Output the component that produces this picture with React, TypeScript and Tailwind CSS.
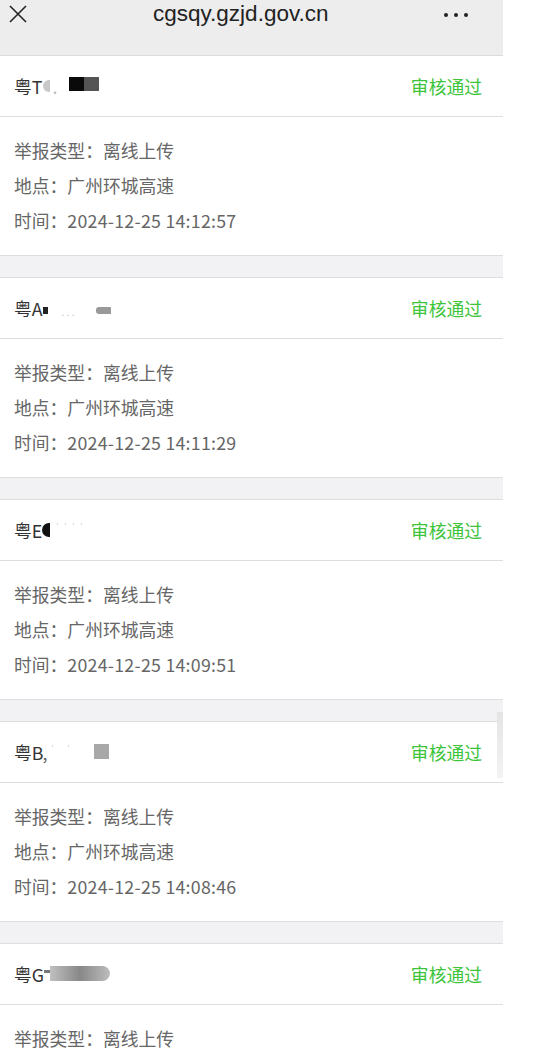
import React from "react";

const font = { fontFamily: '"Noto Sans CJK SC", "Noto Sans", sans-serif' };

type Item = { plate: React.ReactNode; time: string };

function Plate1() {
  return (
    <span className="inline-flex items-center">
      <span>粤T</span>
      <span className="ml-[1px] inline-block h-[12px] w-[7px] rounded-l-full bg-[#c8c8c8] blur-[0.5px]" />
      <span className="ml-[2px] text-[#bbb]">.</span>
      <span className="ml-[12px] -mt-[4px] inline-block h-[14px] w-[15px] bg-[#0a0a0a]" />
      <span className="-mt-[4px] inline-block h-[14px] w-[15px] bg-[#555]" />
    </span>
  );
}
function Plate2() {
  return (
    <span className="inline-flex items-center">
      <span>粤A</span>
      <span className="mt-[4px] inline-block h-[7px] w-[5px] bg-[#222]" />
      <span className="ml-[14px] mt-[6px] text-[10px] text-[#bbb]">. . .</span>
      <span className="ml-[22px] mt-[4px] inline-block h-[7px] w-[15px] rounded-l-[3px] rounded-tr-[1px] bg-[#999] blur-[0.4px]" />
    </span>
  );
}
function Plate3() {
  return (
    <span className="inline-flex items-center">
      <span>粤E</span>
      <span className="inline-block h-[14px] w-[8px] rounded-l-full bg-[#111]" />
      <span className="ml-[6px] -mt-[8px] text-[8px] tracking-[2px] text-[#ccc]">' ' ' '</span>
    </span>
  );
}
function Plate4() {
  return (
    <span className="inline-flex items-center">
      <span>粤B</span>
      <span className="-ml-[1px] text-[#666]">,</span>
      <span className="ml-[4px] -mt-[8px] text-[8px] tracking-[6px] text-[#ccc]">' '</span>
      <span className="ml-[18px] -mt-[2px] inline-block h-[15px] w-[15px] bg-[#a8a8a8]" />
    </span>
  );
}
function Plate5() {
  return (
    <span className="inline-flex items-center">
      <span>粤G</span>
      <span className="-mt-[6px] inline-block h-[3px] w-[6px] bg-[#777]" />
      <span className="-mt-[2px] inline-block h-[15px] w-[60px] rounded-r-full bg-gradient-to-r from-[#c0c0c0] via-[#888] to-[#bdbdbd] blur-[0.6px]" />
    </span>
  );
}

const items: Item[] = [
  { plate: <Plate1 />, time: "2024-12-25 14:12:57" },
  { plate: <Plate2 />, time: "2024-12-25 14:11:29" },
  { plate: <Plate3 />, time: "2024-12-25 14:09:51" },
  { plate: <Plate4 />, time: "2024-12-25 14:08:46" },
  { plate: <Plate5 />, time: "2024-12-25 14:07:30" },
];

function Card({ item, first }: { item: Item; first: boolean }) {
  return (
    <div className={`bg-white border-b border-[#dedede] ${first ? "" : "border-t"}`}>
      <div className="flex h-[61px] items-center justify-between border-b border-[#dedede] pl-[14px] pr-[21px] text-[17.8px]">
        <div className="text-[#333]">{item.plate}</div>
        <div className="text-[#3dc43a]">审核通过</div>
      </div>
      <div className="h-[138px] pl-[14px] pt-[16px] text-[17.8px] leading-[35px] text-[#666]">
        <div>举报类型：离线上传</div>
        <div>地点：广州环城高速</div>
        <div>
          时间：<span className="tracking-[0.25px]">{item.time}</span>
        </div>
      </div>
    </div>
  );
}

export default function App() {
  return (
    <div className="relative h-[1049px] w-[537px] overflow-hidden bg-white" style={font}>
      <div className="w-[503px] bg-[#f2f2f4]">
        <div className="relative flex h-[56px] items-start border-b border-[#dcdcdc] bg-[#ededed]">
          <svg className="absolute left-[9px] top-[5px]" width="18" height="18" viewBox="0 0 18 18">
            <path d="M1 1 L17 17 M17 1 L1 17" stroke="#222" strokeWidth="1.6" fill="none" />
          </svg>
          <div
            className="absolute left-[153px] top-[0px] text-[22.5px] leading-[28px] text-[#222]"
            style={{ fontFamily: '"Liberation Sans", Arial, sans-serif' }}
          >
            cgsqy.gzjd.gov.cn
          </div>
          <div className="absolute left-[444px] top-[13px] flex gap-[6px]">
            <span className="block h-[4px] w-[4px] rounded-full bg-[#222]" />
            <span className="block h-[4px] w-[4px] rounded-full bg-[#222]" />
            <span className="block h-[4px] w-[4px] rounded-full bg-[#222]" />
          </div>
        </div>
        <div className="flex flex-col gap-[21px]">
          {items.map((it, i) => (
            <Card key={i} item={it} first={i === 0} />
          ))}
        </div>
      </div>
      <div className="absolute left-[497px] top-[712px] h-[66px] w-[6px] bg-gradient-to-b from-[#e4e4e4] to-[#f3f3f3]" />
    </div>
  );
}
